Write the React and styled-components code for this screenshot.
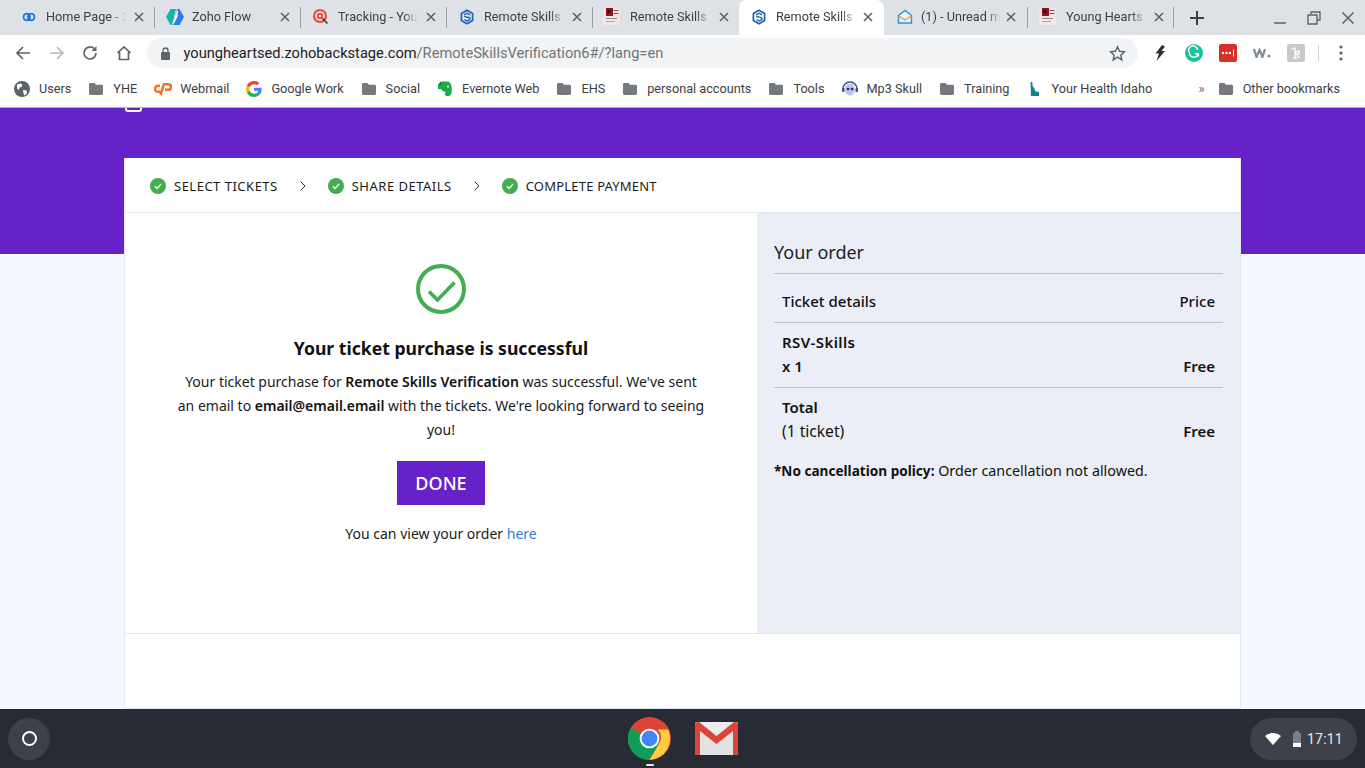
import styled, { createGlobalStyle } from 'styled-components';

const GlobalStyle = createGlobalStyle`
  html, body { margin: 0; padding: 0; height: 100%; overflow: hidden; }
  body { font-family: Roboto, "Liberation Sans", sans-serif; background: #fff; }
  * { box-sizing: border-box; }
`;

const Screen = styled.div`
  width: 1365px;
  height: 768px;
  display: flex;
  flex-direction: column;
  overflow: hidden;
`;

/* browser chrome */
const TabStrip = styled.div`
  height: 35px;
  background: #dee1e6;
  display: flex;
  align-items: stretch;
  padding-left: 9px;
  flex: none;
`;
const Tab = styled.div`
  width: ${p => p.$w || 146}px;
  display: flex;
  align-items: center;
  padding-left: ${p => p.$pad || 12}px;
  padding-bottom: 2px;
  position: relative;
  background: ${p => (p.$active ? '#fff' : 'transparent')};
  border-radius: ${p => (p.$active ? '8px 8px 0 0' : '0')};
  &::after {
    content: '';
    display: ${p => (p.$sep ? 'block' : 'none')};
    position: absolute;
    right: 0;
    top: 7px;
    height: 21px;
    width: 1px;
    background: #9aa0a6;
  }
`;
const TabTitle = styled.div`
  width: ${p => p.$w || 80}px;
  margin-left: ${p => p.$gap || 9}px;
  margin-right: ${p => p.$after || 6}px;
  font-size: 12.7px;
  color: #3c4043;
  white-space: nowrap;
  overflow: hidden;
  -webkit-mask-image: linear-gradient(to right, #000 82%, transparent 100%);
  mask-image: linear-gradient(to right, #000 82%, transparent 100%);
`;
const NewTab = styled.div`
  width: 46px;
  display: flex;
  align-items: center;
  justify-content: center;
`;
const WindowButtons = styled.div`
  margin-left: auto;
  display: flex;
  align-items: center;
  gap: 20px;
  padding-right: 10px;
`;

const Toolbar = styled.div`
  height: 36px;
  background: #fff;
  display: flex;
  align-items: center;
  flex: none;
  padding-left: 14px;
`;
const NavIcons = styled.div`
  display: flex;
  gap: 15.5px;
  align-items: center;
`;
const Omnibox = styled.div`
  width: 991px;
  height: 30px;
  margin-left: 14px;
  border-radius: 15px;
  background: #f1f3f4;
  display: flex;
  align-items: center;
  padding: 0 12px 0 13px;
`;
const Url = styled.div`
  margin-left: 13px;
  font-size: 14.65px;
  color: #202124;
  flex: 1;
  span { color: #70757a; }
`;
const Extensions = styled.div`
  display: flex;
  align-items: center;
  margin-left: 5px;
`;
const ExtSlot = styled.div`
  width: 34px;
  height: 20px;
  display: flex;
  align-items: center;
  justify-content: center;
`;
const ToolDivider = styled.div`
  width: 1px;
  height: 16px;
  background: #cfd2d6;
  margin: 0 5px;
`;

const BookmarkBar = styled.div`
  height: 37px;
  background: #fff;
  border-bottom: 1px solid #b0b3b8;
  display: flex;
  align-items: center;
  gap: 17px;
  padding: 0 25px 1px 14px;
  flex: none;
`;
const Bookmark = styled.div`
  display: flex;
  align-items: center;
  gap: 9px;
  font-size: 12.7px;
  color: #3c4043;
  white-space: nowrap;
`;
const Overflow = styled.div`
  margin-left: auto;
  font-size: 13px;
  color: #5f6368;
  margin-right: -4px;
`;

/* page */
const Page = styled.div`
  flex: 1;
  min-height: 0;
  background: linear-gradient(to bottom, #6622c8 146px, #f5f9ff 146px);
  padding: 0 124px;
  display: flex;
  flex-direction: column;
`;
const LogoSliver = styled.div`
  height: 5px;
  overflow: hidden;
  margin-bottom: 45px;
  flex: none;
  padding-left: 1px;
`;
const LogoBox = styled.div`
  width: 17px;
  height: 14px;
  margin-top: -10px;
  border: 2px solid #fff;
  border-radius: 3px;
`;
const Card = styled.div`
  flex: 1;
  background: #fff;
  border: 1px solid #e1e9f3;
  border-top: 0;
  display: flex;
  flex-direction: column;
  font-family: "Noto Sans", Roboto, sans-serif;
`;
const Stepper = styled.div`
  height: 55px;
  border-bottom: 1px solid #e1e9f3;
  display: flex;
  align-items: center;
  padding: 1px 0 0 25px;
  flex: none;
`;
const Step = styled.div`
  display: flex;
  align-items: center;
  gap: 8px;
  font-size: 13px;
  letter-spacing: ${p => p.$track}px;
  color: #1b1b1b;
  white-space: nowrap;
`;
const StepArrow = styled.div`
  width: 50px;
  display: flex;
  justify-content: center;
`;
const Columns = styled.div`
  height: 421px;
  border-bottom: 1px solid #e1e9f3;
  display: flex;
  flex: none;
`;
const Success = styled.div`
  width: 632px;
  padding: 51px 50.5px 0;
  display: flex;
  flex-direction: column;
  align-items: center;
  text-align: center;
  color: #1b1b1b;
`;
const Heading = styled.h2`
  margin: 20px 0 0;
  font-size: 17.6px;
  line-height: 28px;
  font-weight: 700;
  color: #111;
`;
const Message = styled.p`
  margin: 8px 0 0;
  font-size: 14px;
  line-height: 24px;
  b { font-weight: 600; color: #111; }
`;
const DoneButton = styled.button`
  width: 88px;
  height: 44px;
  margin-top: 19px;
  border: 0;
  background: #6622c8;
  color: #fff;
  font-family: inherit;
  font-size: 18px;
  font-weight: 500;
`;
const ViewOrder = styled.div`
  margin-top: 17px;
  font-size: 14px;
  line-height: 24px;
  a { color: #2f80dc; text-decoration: none; }
`;
const OrderPanel = styled.div`
  flex: 1;
  background: #ebeef6;
  padding: 24px 17px 0;
  color: #111;
`;
const OrderTitle = styled.div`
  font-size: 18px;
  line-height: 30px;
  color: #222;
  padding-bottom: 6px;
  border-bottom: 1px solid #bfc1c5;
`;
const OrderRow = styled.div`
  padding: ${p => (p.$head ? '15px' : '7px')} 8px 9px;
  border-bottom: ${p => (p.$last ? '0' : '1px solid #bfc1c5')};
  font-size: 15px;
  line-height: 24px;
  font-weight: ${p => (p.$head ? 500 : 600)};
`;
const OrderLine = styled.div`
  display: flex;
  justify-content: space-between;
  align-items: center;
`;
const ItemName = styled.span`
  letter-spacing: ${p => p.$track || 0}px;
`;
const TicketCount = styled.span`
  font-weight: 400;
  font-size: 15.6px;
`;
const Policy = styled.div`
  margin-top: 7px;
  font-size: 14.3px;
  line-height: 24px;
  b { font-weight: 700; font-size: 13.6px; }
`;
const BelowCard = styled.div`
  flex: 1;
`;

/* shelf */
const Shelf = styled.div`
  height: 59px;
  background: #272b33;
  display: flex;
  align-items: center;
  padding: 0 8px 0 8px;
  flex: none;
`;
const Launcher = styled.div`
  width: 42px;
  height: 42px;
  border-radius: 50%;
  background: #3e4148;
  display: flex;
  align-items: center;
  justify-content: center;
`;
const LauncherRing = styled.div`
  width: 15px;
  height: 15px;
  border: 2px solid #fff;
  border-radius: 50%;
`;
const ShelfApps = styled.div`
  display: flex;
  align-items: center;
  gap: 24px;
  margin-left: 578px;
`;
const ShelfApp = styled.div`
  position: relative;
  height: 43px;
  display: flex;
  align-items: center;
`;
const RunningDot = styled.div`
  position: absolute;
  bottom: -6px;
  left: 18px;
  width: 8px;
  height: 2px;
  border-radius: 1px;
  background: #e8eaed;
`;
const Tray = styled.div`
  margin-left: auto;
  width: 107px;
  height: 42px;
  border-radius: 21px;
  background: #3e4148;
  display: flex;
  align-items: center;
  padding-left: 15px;
  gap: 5px;
  color: #e8eaed;
  font-size: 14px;
  letter-spacing: 0.2px;
`;

/* drawn icons */
const Close = ({ c = '#5f6368' }) => (
  <svg width="14" height="14" viewBox="0 0 14 14" style={{ flex: 'none' }}>
    <path d="M3 3l8 8M11 3l-8 8" stroke={c} strokeWidth="1.600" fill="none" />
  </svg>
);
const Folder = () => (
  <svg width="16" height="16" viewBox="0 0 16 16" style={{ flex: 'none' }}>
    <path d="M1 3.500C1 2.700 1.600 2 2.400 2h4l1.600 1.800h5.600c.8 0 1.400.6 1.400 1.400v7.400c0 .8-.6 1.400-1.400 1.400H2.400c-.8 0-1.400-.6-1.400-1.400z" fill="#75787c" />
  </svg>
);
const ZohoHex = () => (
  <svg width="16" height="16" viewBox="0 0 16 16" style={{ flex: 'none' }}>
    <path d="M8 1.200l5.600 3.300v7L8 14.800l-5.600-3.300v-7z" fill="none" stroke="#1b63b5" strokeWidth="1.700" />
    <path d="M5 5.800l3-1.600 3 1.600M5.200 7.400l5.600 1.500v1.600L8 12 5.600 10.700" fill="none" stroke="#1b63b5" strokeWidth="1.400" />
  </svg>
);
const Rings = () => (
  <svg width="16" height="16" viewBox="0 0 16 16" style={{ flex: 'none' }}>
    <circle cx="8" cy="8" r="8" fill="#d6e6f8" />
    <circle cx="5.800" cy="8" r="3.300" fill="none" stroke="#2473cf" strokeWidth="1.800" />
    <circle cx="10.200" cy="8" r="3.300" fill="none" stroke="#2473cf" strokeWidth="1.800" />
  </svg>
);
const FlowIcon = () => (
  <svg width="18" height="16" viewBox="0 0 18 16" style={{ flex: 'none' }}>
    <path d="M4.500 0H10L6 16H4.500L0 8z" fill="#12b5a8" />
    <path d="M11 0h2.500L18 8l-4.500 8H7z" fill="#2a7fe6" />
    <path d="M10.800 1.500L9 8 7 14.500 8 14.800l3.600-7.300L12 2z" fill="#fff" />
  </svg>
);
const Target = () => (
  <svg width="17" height="17" viewBox="0 0 17 17" style={{ flex: 'none' }}>
    <circle cx="8" cy="8" r="7" fill="#e8483d" />
    <circle cx="8" cy="8" r="4.800" fill="#f5e9e7" />
    <circle cx="8" cy="8" r="3.200" fill="#e8483d" />
    <circle cx="8" cy="8" r="1.300" fill="#f5e9e7" />
    <path d="M10.500 10.500l5 5" stroke="#33373c" strokeWidth="1.500" />
  </svg>
);
const DocThumb = () => (
  <svg width="17" height="17" viewBox="0 0 17 17" style={{ flex: 'none' }}>
    <rect width="17" height="17" fill="#f6e0e0" />
    <rect x="0" y="9" width="17" height="8" fill="#efe9e9" />
    <rect x="3" y="0" width="7" height="8" fill="#96111a" />
    <rect x="4.500" y="2" width="3" height="3" fill="#2a1012" />
    <rect x="10.500" y="2" width="5" height="1" fill="#666" />
    <rect x="10.500" y="5" width="5" height="1" fill="#666" />
    <rect x="3" y="10" width="11" height="1" fill="#888" />
    <rect x="3" y="13" width="9" height="1" fill="#e08b8b" />
  </svg>
);
const MailOpen = () => (
  <svg width="16" height="16" viewBox="0 0 16 16" style={{ flex: 'none' }}>
    <path d="M1.500 6.500L8 1.500l6.500 5V14h-13z" fill="#e8f3fb" stroke="#2e94d4" strokeWidth="1.400" />
    <path d="M1.500 7L8 11l6.500-4" fill="none" stroke="#e8943a" strokeWidth="1.400" />
  </svg>
);
const Globe = () => (
  <svg width="16" height="16" viewBox="0 0 16 16" style={{ flex: 'none' }}>
    <circle cx="8" cy="8" r="8" fill="#5f6368" />
    <path d="M3 3.500l3-1 2.500 1-1 2.500-2 .5-.5 2.500-2-1.500zM9 9l3.500.5.500 2.500-2.500 2.500-1-2z" fill="#fff" />
  </svg>
);
const CPanel = () => (
  <svg width="18" height="14" viewBox="0 0 18 14" style={{ flex: 'none', marginRight: '-1px' }}>
    <path d="M6 3.800H4a3 3 0 000 6h2.500" fill="none" stroke="#f4722a" strokeWidth="2.600" />
    <path d="M6.500 13L10 2.200h4.200a2.800 2.800 0 010 5.600H11" fill="none" stroke="#f4722a" strokeWidth="2.600" />
  </svg>
);
const GoogleG = () => (
  <svg width="16" height="16" viewBox="0 0 48 48" style={{ flex: 'none' }}>
    <path fill="#EA4335" d="M24 9.500c3.500 0 6.700 1.200 9.200 3.600l6.900-6.900C35.900 2.400 30.500 0 24 0 14.600 0 6.500 5.400 2.600 13.200l8 6.200C12.500 13.700 17.800 9.500 24 9.500z" />
    <path fill="#4285F4" d="M46.900 24.500c0-1.600-.1-3.100-.4-4.500H24v9h12.900c-.6 3-2.200 5.500-4.700 7.200l7.700 6c4.500-4.200 7-10.300 7-17.700z" />
    <path fill="#FBBC05" d="M10.500 28.700c-.5-1.400-.8-3-.8-4.700s.3-3.200.8-4.700l-8-6.200C.9 16.500 0 20.100 0 24s.9 7.500 2.600 10.800l7.900-6.100z" />
    <path fill="#34A853" d="M24 48c6.500 0 11.900-2.100 15.900-5.800l-7.700-6c-2.200 1.400-4.900 2.300-8.200 2.300-6.200 0-11.500-4.200-13.400-9.800l-8 6.200C6.500 42.600 14.600 48 24 48z" />
  </svg>
);
const Evernote = () => (
  <svg width="16" height="17" viewBox="0 0 16 17" style={{ flex: 'none' }}>
    <path d="M4 1.500h6c2.500 0 4 1.500 4.500 5s.5 7-1 8.500-5 1.500-5.500-.5c-.3-1.500.5-2.500 2-2.500-3 0-5-1-6-3H1V5z" fill="#1fa84a" />
    <path d="M4 1.500V5H1z" fill="#0b7a30" />
    <circle cx="11" cy="6.500" r="1" fill="#fff" />
  </svg>
);
const Skull = () => (
  <svg width="18" height="18" viewBox="0 0 18 18" style={{ flex: 'none', marginRight: '-2px' }}>
    <path d="M2 9a7 7 0 0114 0" fill="none" stroke="#3d4f7c" strokeWidth="1.600" />
    <ellipse cx="9" cy="9.500" rx="5" ry="6" fill="#b7c5ea" />
    <ellipse cx="7" cy="9" rx="1.400" ry="1.200" fill="#27304f" />
    <ellipse cx="11" cy="9" rx="1.400" ry="1.200" fill="#27304f" />
    <rect x="1" y="8" width="2.500" height="4" rx="1" fill="#3d4f7c" />
    <rect x="14.500" y="8" width="2.500" height="4" rx="1" fill="#3d4f7c" />
  </svg>
);
const Idaho = () => (
  <svg width="16" height="16" viewBox="0 0 16 16" style={{ flex: 'none' }}>
    <path d="M4.500 1h1.800l.3 4 2 3 .7 2.500 3 .3.700.7V15h-8z" fill="#117f8c" />
  </svg>
);
const Check = () => (
  <svg width="16" height="16" viewBox="0 0 16 16" style={{ flex: 'none' }}>
    <circle cx="8" cy="8" r="8" fill="#43ad4f" />
    <path d="M4.800 8.300l2.200 2.200 4.200-4.600" fill="none" stroke="#fff" strokeWidth="1.300" />
  </svg>
);
const Chevron = () => (
  <svg width="6" height="10" viewBox="0 0 6 10">
    <path d="M.7.700L5 5 .7 9.300" fill="none" stroke="#333" strokeWidth="1" />
  </svg>
);
const BigCheck = () => (
  <svg width="50" height="50" viewBox="0 0 50 50" style={{ flex: 'none' }}>
    <circle cx="25" cy="25" r="23" fill="none" stroke="#43ad4f" strokeWidth="4" />
    <path d="M13 27.500l8.500 8.500L38.500 18.500" fill="none" stroke="#43ad4f" strokeWidth="3.600" />
  </svg>
);
const ChromeLogo = () => (
  <svg width="43" height="43" viewBox="0 0 48 48">
    <circle cx="24" cy="24" r="24" fill="#db4437" />
    <path d="M24 24L3.200 12A24 24 0 0024 48l10.400-18z" fill="#0f9d58" />
    <path d="M24 14h20.800A24 24 0 0124 48l10.400-18a12 12 0 00-1.300-16z" fill="#ffcd40" />
    <circle cx="24" cy="24" r="11" fill="#fff" />
    <circle cx="24" cy="24" r="8.800" fill="#4285f4" />
  </svg>
);
const GmailLogo = () => (
  <svg width="43" height="33" viewBox="0 0 43 33">
    <rect width="43" height="33" rx="2" fill="#ececec" />
    <path d="M5 33V7l16.500 13L38 7v26" fill="#e2e2e2" />
    <path d="M0 3a3 3 0 013-3h1l17.500 14L39 0h1a3 3 0 013 3v28a2 2 0 01-2 2h-3V9L21.500 22 5 9v24H2a2 2 0 01-2-2z" fill="#db4437" />
  </svg>
);

const tabs = [
  { icon: <Rings />, title: 'Home Page - 2020', sep: true },
  { icon: <FlowIcon />, title: 'Zoho Flow', sep: true, pad: 11, gap: 8 },
  { icon: <Target />, title: 'Tracking - Your Orders', sep: true, pad: 11 },
  { icon: <ZohoHex />, title: 'Remote Skills Verification', sep: true },
  { icon: <DocThumb />, title: 'Remote Skills Verification', pad: 10, gap: 10, after: 7 },
  { icon: <ZohoHex />, title: 'Remote Skills Verification', active: true, w: 145, after: 5 },
  { icon: <MailOpen />, title: '(1) - Unread messages', sep: true, w: 144, pad: 13, gap: 8, after: 3 },
  { icon: <DocThumb />, title: 'Young Hearts Education', sep: true, pad: 11, gap: 10 },
];

const bookmarks = [
  [<Globe />, 'Users'],
  [<Folder />, 'YHE'],
  [<CPanel />, 'Webmail'],
  [<GoogleG />, 'Google Work'],
  [<Folder />, 'Social'],
  [<Evernote />, 'Evernote Web'],
  [<Folder />, 'EHS'],
  [<Folder />, 'personal accounts'],
  [<Folder />, 'Tools'],
  [<Skull />, 'Mp3 Skull'],
  [<Folder />, 'Training'],
  [<Idaho />, 'Your Health Idaho'],
];

const App = () => (
  <Screen>
    <GlobalStyle />
    <TabStrip>
      {tabs.map((t, i) => (
        <Tab key={i} $sep={t.sep} $active={t.active} $w={t.w} $pad={t.pad}>
          {t.icon}
          <TabTitle $gap={t.gap} $after={t.after}>{t.title}</TabTitle>
          <Close />
        </Tab>
      ))}
      <NewTab>
        <svg width="14" height="14" viewBox="0 0 14 14">
          <path d="M7 0v14M0 7h14" stroke="#3c4043" strokeWidth="2" />
        </svg>
      </NewTab>
      <WindowButtons>
        <svg width="14" height="14" viewBox="0 0 14 14">
          <path d="M1 12h12" stroke="#5f6368" strokeWidth="1.500" />
        </svg>
        <svg width="14" height="14" viewBox="0 0 14 14">
          <path d="M4 3V1h9v8h-3M1 4h9v9H1z" fill="none" stroke="#5f6368" strokeWidth="1.400" />
        </svg>
        <svg width="14" height="14" viewBox="0 0 14 14">
          <path d="M1.500 1.500l11 11M12.500 1.500l-11 11" stroke="#5f6368" strokeWidth="1.500" />
        </svg>
      </WindowButtons>
    </TabStrip>

    <Toolbar>
      <NavIcons>
        <svg width="18" height="18" viewBox="0 0 18 18">
          <path d="M16 9H3M9 3L3 9l6 6" fill="none" stroke="#5f6368" strokeWidth="1.700" />
        </svg>
        <svg width="18" height="18" viewBox="0 0 18 18">
          <path d="M2 9h13M9 3l6 6-6 6" fill="none" stroke="#b5b8bc" strokeWidth="1.700" />
        </svg>
        <svg width="18" height="18" viewBox="0 0 18 18">
          <path d="M15 9a6 6 0 11-1.800-4.300" fill="none" stroke="#5f6368" strokeWidth="1.700" />
          <path d="M15.500 2v5h-5z" fill="#5f6368" />
        </svg>
        <svg width="18" height="18" viewBox="0 0 18 18">
          <path d="M2.500 9L9 3l6.500 6M4.500 8v7.500h9V8" fill="none" stroke="#5f6368" strokeWidth="1.700" />
        </svg>
      </NavIcons>
      <Omnibox>
        <svg width="11" height="13" viewBox="0 0 11 13" style={{ flex: 'none' }}>
          <path d="M3 5.500V3.500a2.500 2.500 0 015 0v2" fill="none" stroke="#5f6368" strokeWidth="1.300" />
          <rect x="1" y="5" width="9" height="8" rx="1" fill="#5f6368" />
        </svg>
        <Url>youngheartsed.zohobackstage.com<span>/RemoteSkillsVerification6#/?lang=en</span></Url>
        <svg width="17" height="17" viewBox="0 0 24 24" style={{ flex: 'none' }}>
          <path d="M12 2.500l2.900 6.300 6.900.8-5.100 4.700 1.400 6.800L12 17.200l-6.100 3.900 1.400-6.800L2.200 9.600l6.900-.8z" fill="none" stroke="#5f6368" strokeWidth="2" />
        </svg>
      </Omnibox>
      <Extensions>
        <ExtSlot>
          <svg width="12" height="16" viewBox="0 0 12 16">
            <path d="M8 0L1.500 8.500H5L2.500 16 11 6H7.500L11 1.500z" fill="#2e3033" />
          </svg>
        </ExtSlot>
        <ExtSlot>
          <svg width="18" height="18" viewBox="0 0 18 18">
            <circle cx="9" cy="9" r="9" fill="#15c39a" />
            <path d="M12.600 6A4.500 4.500 0 104.500 9a4.500 4.500 0 008.500 1.800M13.300 12.500V9.800H10" fill="none" stroke="#fff" strokeWidth="1.500" />
          </svg>
        </ExtSlot>
        <ExtSlot>
          <svg width="18" height="18" viewBox="0 0 18 18">
            <rect width="18" height="18" rx="2" fill="#d92f28" />
            <circle cx="4" cy="9" r="1.200" fill="#fff" />
            <circle cx="7.500" cy="9" r="1.200" fill="#fff" />
            <circle cx="11" cy="9" r="1.200" fill="#fff" />
            <rect x="14" y="5.500" width="1" height="7" fill="#fff" />
          </svg>
        </ExtSlot>
        <ExtSlot>
          <svg width="18" height="10" viewBox="0 0 18 10">
            <path d="M1 1l2.500 8L6.500 2l3 7L12 1" fill="none" stroke="#7f8c94" strokeWidth="2.200" />
            <circle cx="16" cy="8" r="1.500" fill="#7f8c94" />
          </svg>
        </ExtSlot>
        <ExtSlot>
          <svg width="18" height="18" viewBox="0 0 18 18">
            <rect width="18" height="18" rx="2" fill="#c8c9cb" />
            <path d="M4.500 5l3.500-1v10M6 14h4M8 8.500c2-2 4.500-1.500 4.500 0 0 1-1.500 1.500-3 1.500l3 4" fill="none" stroke="#fff" strokeWidth="1.300" />
          </svg>
        </ExtSlot>
        <ToolDivider />
        <ExtSlot>
          <svg width="4" height="16" viewBox="0 0 4 16">
            <circle cx="2" cy="2" r="1.600" fill="#5f6368" />
            <circle cx="2" cy="8" r="1.600" fill="#5f6368" />
            <circle cx="2" cy="14" r="1.600" fill="#5f6368" />
          </svg>
        </ExtSlot>
      </Extensions>
    </Toolbar>

    <BookmarkBar>
      {bookmarks.map(([icon, label]) => (
        <Bookmark key={label}>{icon}{label}</Bookmark>
      ))}
      <Overflow>»</Overflow>
      <Bookmark><Folder />Other bookmarks</Bookmark>
    </BookmarkBar>

    <Page>
      <LogoSliver><LogoBox /></LogoSliver>
      <Card>
        <Stepper>
          <Step $track={0.5}><Check />SELECT TICKETS</Step>
          <StepArrow><Chevron /></StepArrow>
          <Step $track={0.5}><Check />SHARE DETAILS</Step>
          <StepArrow><Chevron /></StepArrow>
          <Step $track={0.2}><Check />COMPLETE PAYMENT</Step>
        </Stepper>
        <Columns>
          <Success>
            <BigCheck />
            <Heading>Your ticket purchase is successful</Heading>
            <Message>
              Your ticket purchase for <b>Remote Skills Verification</b> was successful. We've sent an email to <b>email@email.email</b> with the tickets. We're looking forward to seeing you!
            </Message>
            <DoneButton>DONE</DoneButton>
            <ViewOrder>You can view your order <a href="#order">here</a></ViewOrder>
          </Success>
          <OrderPanel>
            <OrderTitle>Your order</OrderTitle>
            <OrderRow $head>
              <OrderLine><span>Ticket details</span><span>Price</span></OrderLine>
            </OrderRow>
            <OrderRow>
              <OrderLine><ItemName $track={0.4}>RSV-Skills</ItemName></OrderLine>
              <OrderLine><span>x 1</span><span>Free</span></OrderLine>
            </OrderRow>
            <OrderRow $last>
              <OrderLine><span>Total</span></OrderLine>
              <OrderLine><TicketCount>(1 ticket)</TicketCount><span>Free</span></OrderLine>
            </OrderRow>
            <Policy><b>*No cancellation policy:</b> Order cancellation not allowed.</Policy>
          </OrderPanel>
        </Columns>
        <BelowCard />
      </Card>
    </Page>

    <Shelf>
      <Launcher><LauncherRing /></Launcher>
      <ShelfApps>
        <ShelfApp><ChromeLogo /><RunningDot /></ShelfApp>
        <ShelfApp><GmailLogo /></ShelfApp>
      </ShelfApps>
      <Tray>
        <svg width="22" height="12" viewBox="0 0 22 12" style={{ flex: 'none' }}>
          <path d="M0 3a12 12 0 0116 0L8 12z" fill="#fff" />
        </svg>
        <svg width="10" height="16" viewBox="0 0 10 16" style={{ flex: 'none' }}>
          <path d="M3 0h4v2h2v14H1V2h2z" fill="#7b7e85" />
          <rect x="1" y="12" width="8" height="4" fill="#fff" />
        </svg>
        <span>17:11</span>
      </Tray>
    </Shelf>
  </Screen>
);

export default App;
